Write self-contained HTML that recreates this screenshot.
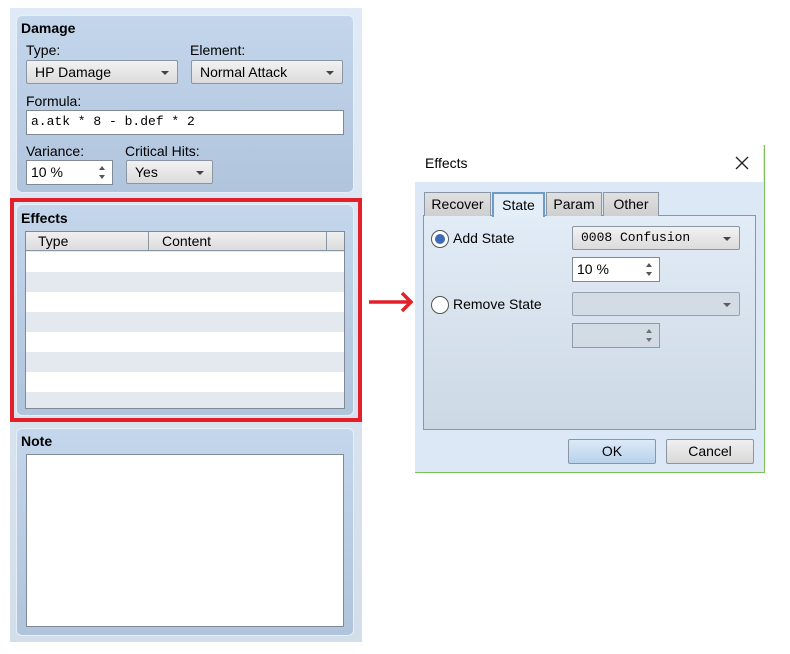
<!DOCTYPE html>
<html><head><style>
*{box-sizing:border-box;margin:0;padding:0}
body{width:790px;height:654px;background:#fff;position:relative;font-family:"Liberation Sans","DejaVu Sans",sans-serif;font-size:14px;color:#000;overflow:hidden}
.a{position:absolute}
.grp{position:absolute;background:linear-gradient(#c3d6ec,#b0c4dc);border:1px solid #e6eef8;border-radius:6px}
.h{position:absolute;font-weight:bold;font-size:14px}
.lbl{position:absolute;font-size:14px}
.combo{position:absolute;border:1px solid #8a96a4;border-radius:2px;background:linear-gradient(#f2f2f2,#dcdcdc);font-size:14px;padding-left:8px;line-height:22px}
.combo:after{content:"";position:absolute;right:8px;top:10px;border-left:4px solid transparent;border-right:4px solid transparent;border-top:4px solid #444}
.inp{position:absolute;background:#fff;border:1px solid #7f8a96;font-size:14px;padding-left:4px;line-height:22px}
.spin:before{content:"";position:absolute;right:7px;top:5px;border-left:3px solid transparent;border-right:3px solid transparent;border-bottom:4px solid #555}
.spin:after{content:"";position:absolute;right:7px;bottom:5px;border-left:3px solid transparent;border-right:3px solid transparent;border-top:4px solid #555}
.mono{font-family:"Liberation Mono","DejaVu Sans Mono",monospace;font-size:13px}
.tab{position:absolute;top:192px;height:24px;border:1px solid #8a96a4;border-bottom:none;background:linear-gradient(#e0e0e0,#cfcfcf);font-size:14px;text-align:center;line-height:23px}
.btn{position:absolute;border:1px solid #8a96a4;border-radius:2px;font-size:14px;text-align:center;line-height:22px}
.radio{position:absolute;width:18px;height:18px;border-radius:50%;border:1px solid #555;background:#fff}
</style></head><body>
<div class="a" style="left:10px;top:8px;width:352px;height:634px;background:linear-gradient(#e0eaf6,#d2deea)"></div>

<div class="grp" style="left:16px;top:15px;width:338px;height:178px"></div>
<div class="h" style="left:21px;top:20px">Damage</div>
<div class="lbl" style="left:26px;top:42px">Type:</div>
<div class="lbl" style="left:190px;top:42px">Element:</div>
<div class="combo" style="left:26px;top:60px;width:152px;height:24px">HP Damage</div>
<div class="combo" style="left:191px;top:60px;width:152px;height:24px">Normal Attack</div>
<div class="lbl" style="left:26px;top:93px">Formula:</div>
<div class="inp mono" style="left:26px;top:110px;width:318px;height:25px">a.atk * 8 - b.def * 2</div>
<div class="lbl" style="left:26px;top:143px">Variance:</div>
<div class="lbl" style="left:125px;top:143px">Critical Hits:</div>
<div class="inp spin" style="left:26px;top:160px;width:87px;height:25px">10 %</div>
<div class="combo" style="left:126px;top:160px;width:87px;height:24px">Yes</div>

<div class="a" style="left:10px;top:198px;width:352px;height:224px;border:4px solid #e3202a"></div>
<div class="grp" style="left:16px;top:204px;width:338px;height:212px"></div>
<div class="h" style="left:21px;top:210px">Effects</div>
<div class="a" style="left:25px;top:231px;width:320px;height:178px;border:1px solid #7f8a96;background:repeating-linear-gradient(#e4e9ef 0 20px,#fff 20px 40px)">
 <div class="a" style="left:0;top:0;width:318px;height:19px;background:linear-gradient(#f0f0f0,#dcdcdc);border-bottom:1px solid #8a96a4"></div>
 <div class="a" style="left:12px;top:1px">Type</div>
 <div class="a" style="left:122px;top:0;width:1px;height:19px;background:#8a96a4"></div>
 <div class="a" style="left:136px;top:1px">Content</div>
 <div class="a" style="left:300px;top:0;width:1px;height:19px;background:#8a96a4"></div>
</div>

<div class="grp" style="left:16px;top:428px;width:338px;height:208px"></div>
<div class="h" style="left:21px;top:433px">Note</div>
<div class="a" style="left:26px;top:454px;width:318px;height:173px;background:#fff;border:1px solid #7f8a96"></div>

<svg class="a" style="left:366px;top:290px" width="50" height="26"><path d="M3 12H45M36 3L45 12L36 21" stroke="#e3202a" stroke-width="3.5" fill="none"/></svg>

<div class="a" style="left:415px;top:145px;width:350px;height:328px;background:#dce8f5;border-right:1px solid #7cc05a;border-bottom:1px solid #7cc05a"></div>
<div class="a" style="left:415px;top:145px;width:348px;height:37px;background:#fff"></div>
<div class="lbl" style="left:425px;top:155px">Effects</div>
<svg class="a" style="left:735px;top:156px" width="14" height="14"><path d="M1 1L13 13M13 1L1 13" stroke="#222" stroke-width="1.3"/></svg>
<div class="a" style="left:423px;top:215px;width:333px;height:215px;border:1px solid #8a96a4;background:linear-gradient(#e2ecf7,#ccd8e4)"></div>
<div class="tab" style="left:424px;width:67px">Recover</div>
<div class="tab" style="left:492px;width:53px;background:#e4eef8;border:2px solid #6f9cc6;border-bottom:none;height:25px">State</div>
<div class="tab" style="left:546px;width:56px">Param</div>
<div class="tab" style="left:603px;width:56px">Other</div>
<div class="radio" style="left:431px;top:230px"><div class="a" style="left:3px;top:3px;width:10px;height:10px;border-radius:50%;background:#3c6cb4"></div></div>
<div class="lbl" style="left:453px;top:230px">Add State</div>
<div class="combo mono" style="left:572px;top:226px;width:168px;height:24px">0008 Confusion</div>
<div class="inp spin" style="left:572px;top:257px;width:88px;height:25px">10 %</div>
<div class="radio" style="left:431px;top:296px"></div>
<div class="lbl" style="left:453px;top:296px">Remove State</div>
<div class="combo" style="left:572px;top:292px;width:168px;height:24px;background:#d2dbe4;opacity:.85"></div>
<div class="inp spin" style="left:572px;top:323px;width:88px;height:25px;background:#d2dbe4;opacity:.8"></div>
<div class="btn" style="left:568px;top:439px;width:88px;height:25px;background:linear-gradient(#dceaf8,#b8d2ea)">OK</div>
<div class="btn" style="left:666px;top:439px;width:88px;height:25px;background:linear-gradient(#f0f0f0,#d8d8d8)">Cancel</div>
</body></html>
